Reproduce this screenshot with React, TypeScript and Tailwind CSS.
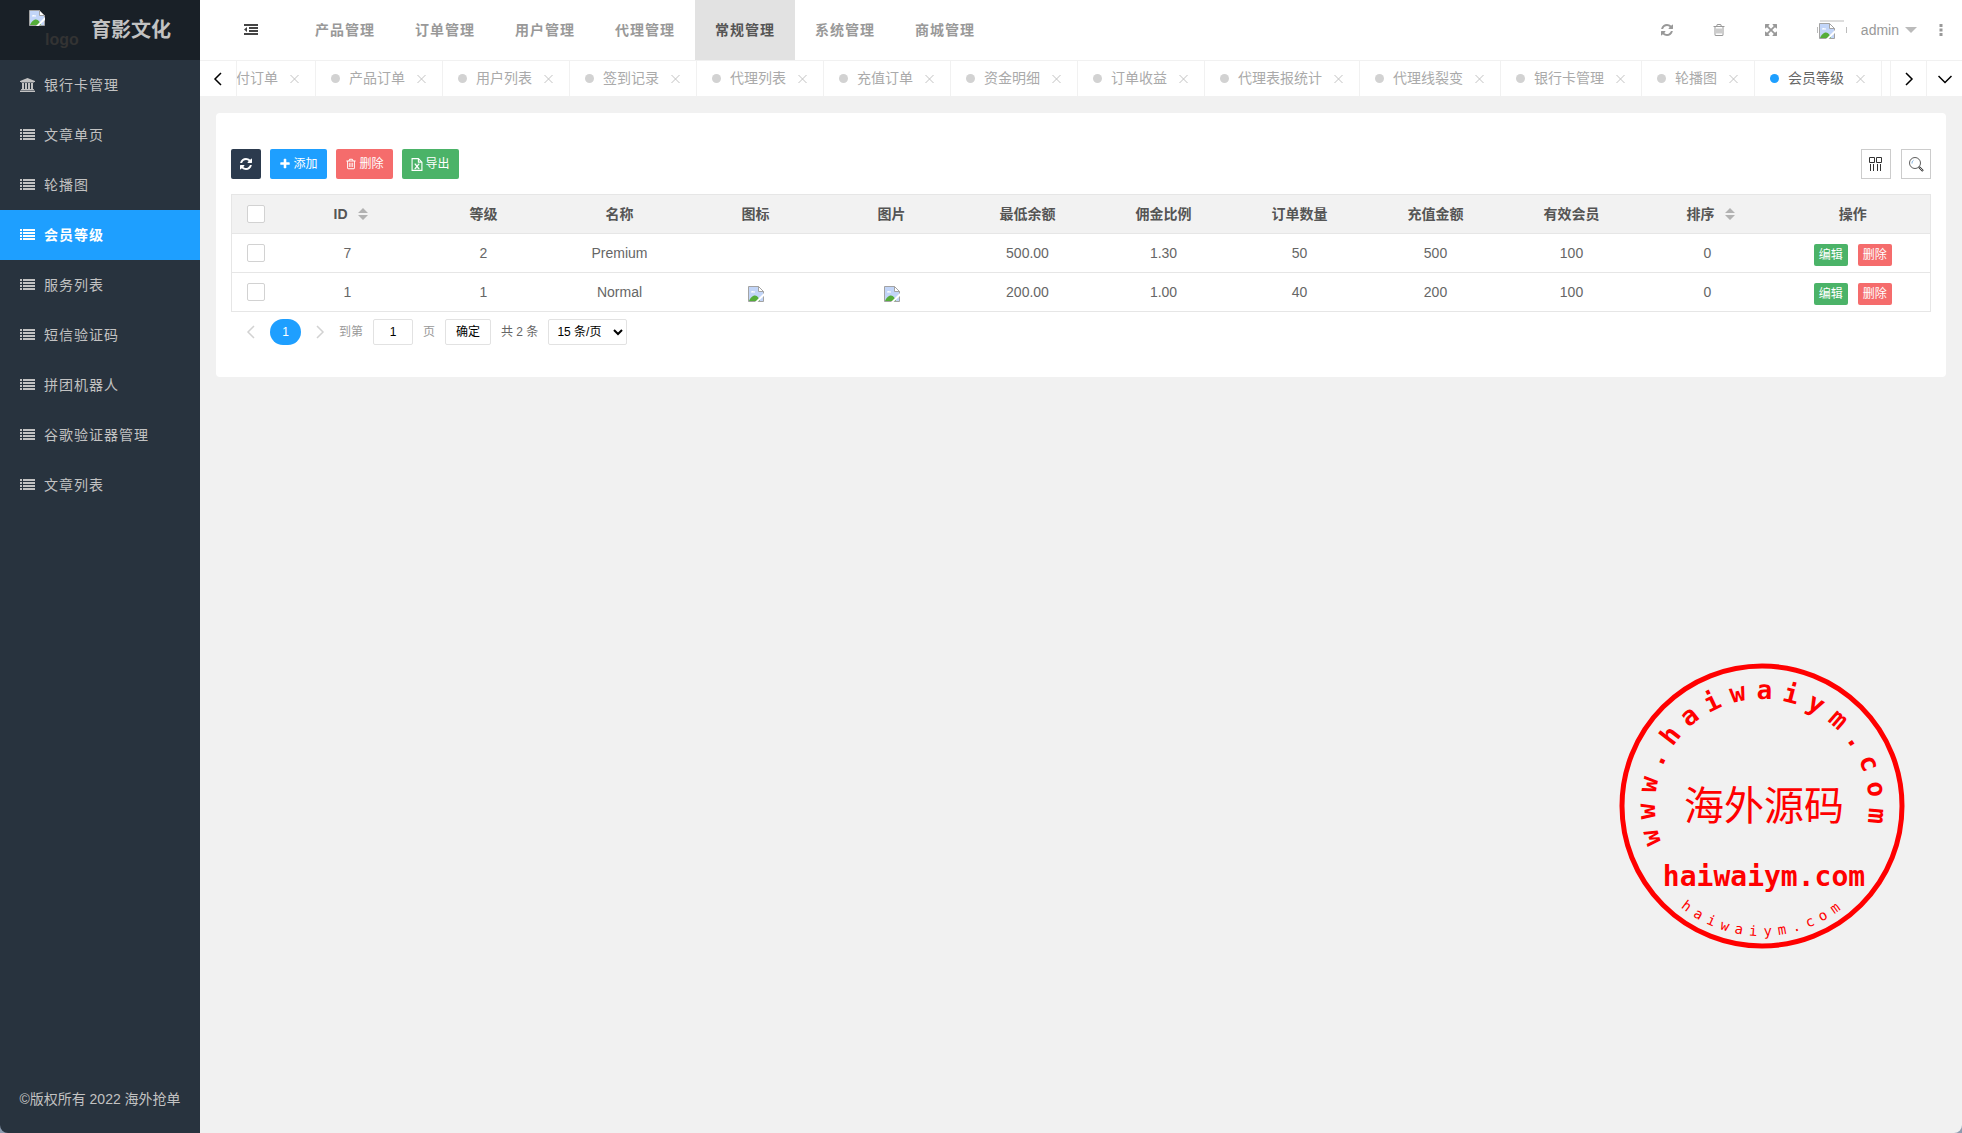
import type { ReactNode } from 'react'

// ── Data ─────────────────────────────────────────────────────
const sideItems = ['银行卡管理', '文章单页', '轮播图', '会员等级', '服务列表', '短信验证码', '拼团机器人', '谷歌验证器管理', '文章列表']
const activeSide = '会员等级'

const topItems = ['产品管理', '订单管理', '用户管理', '代理管理', '常规管理', '系统管理', '商城管理']
const activeTop = '常规管理'

const tabs = [
  '支付订单', '产品订单', '用户列表', '签到记录', '代理列表', '充值订单', '资金明细',
  '订单收益', '代理表报统计', '代理线裂变', '银行卡管理', '轮播图', '会员等级',
]
const activeTab = '会员等级'

const columns = [
  { title: 'ID', sortable: true },
  { title: '等级' },
  { title: '名称' },
  { title: '图标' },
  { title: '图片' },
  { title: '最低余额' },
  { title: '佣金比例' },
  { title: '订单数量' },
  { title: '充值金额' },
  { title: '有效会员' },
  { title: '排序', sortable: true },
]

const rows = [
  { id: 7, level: 2, name: 'Premium', hasImage: false, balance: '500.00', rate: '1.30', orders: 50, recharge: 500, members: 100, sort: 0 },
  { id: 1, level: 1, name: 'Normal', hasImage: true, balance: '200.00', rate: '1.00', orders: 40, recharge: 200, members: 100, sort: 0 },
]

// ── Icons ────────────────────────────────────────────────────
const REFRESH =
  'M1639 1056q0 5-1 7-64 268-268 434.5t-478 166.5q-146 0-282.5-55t-243.5-157l-129 129q-19 19-45 19t-45-19-19-45v-448q0-26 19-45t45-19h448q26 0 45 19t19 45-19 45l-137 137q71 66 161 102t187 36q134 0 250-65t186-179q11-17 53-117 8-23 30-23h192q13 0 22.5 9.5t9.5 22.5zm25-800v448q0 26-19 45t-45 19h-448q-26 0-45-19t-19-45 19-45l138-138q-148-137-349-137-134 0-250 65t-186 179q-11 17-53 117-8 23-30 23h-199q-13 0-22.5-9.5t-9.5-22.5v-7q65-268 270-434.5t480-166.5q146 0 284 55.5t245 156.5l130-129q19-19 45-19t45 19 19 45z'
const TRASH =
  'M704 736v576q0 14-9 23t-23 9h-64q-14 0-23-9t-9-23v-576q0-14 9-23t23-9h64q14 0 23 9t9 23zm256 0v576q0 14-9 23t-23 9h-64q-14 0-23-9t-9-23v-576q0-14 9-23t23-9h64q14 0 23 9t9 23zm256 0v576q0 14-9 23t-23 9h-64q-14 0-23-9t-9-23v-576q0-14 9-23t23-9h64q14 0 23 9t9 23zm128 724v-948h-896v948q0 22 7 40.5t14.5 27 10.5 8.5h832q3 0 10.5-8.5t14.5-27 7-40.5zm-672-1076h448l-48-117q-7-9-17-11h-317q-10 2-17 11zm928 32v64q0 14-9 23t-23 9h-96v948q0 83-47 143.5t-113 60.5h-832q-66 0-113-58.5t-47-141.5v-952h-96q-14 0-23-9t-9-23v-64q0-14 9-23t23-9h309l70-167q15-37 54-63t79-26h320q40 0 79 26t54 63l70 167h309q14 0 23 9t9 23z'
const EXPAND =
  'M1411 541l-355 355 355 355 144-144q29-31 70-14 39 17 39 59v448q0 26-19 45t-45 19h-448q-42 0-59-40-17-39 14-69l144-144-355-355-355 355 144 144q31 30 14 69-17 40-59 40h-448q-26 0-45-19t-19-45v-448q0-42 40-59 39-17 69 14l144 144 355-355-355-355-144 144q-19 19-45 19-12 0-24-5-40-17-40-59v-448q0-26 19-45t45-19h448q42 0 59 40 17 39-14 69l-144 144 355 355 355-355-144-144q-31-30-14-69 17-40 59-40h448q26 0 45 19t19 45v448q0 42-39 59-13 5-25 5-26 0-45-19z'
const PLUS =
  'M1600 736v192q0 40-28 68t-68 28h-416v416q0 40-28 68t-68 28h-192q-40 0-68-28t-28-68v-416h-416q-40 0-68-28t-28-68v-192q0-40 28-68t68-28h416v-416q0-40 28-68t68-28h192q40 0 68 28t28 68v416h416q40 0 68 28t28 68z'

function Glyph({ d, className }: { d: string; className: string }) {
  return (
    <svg viewBox="0 0 1792 1792" fill="currentColor" className={className} aria-hidden="true">
      <path d={d} />
    </svg>
  )
}

function ListIcon() {
  return (
    <svg viewBox="0 0 15 14" fill="currentColor" className="w-[15px] h-[14px] shrink-0" aria-hidden="true">
      <path d="M0 1h2v2H0zM3 1h12v2H3zM0 4h2v2H0zM3 4h12v2H3zM0 7h2v2H0zM3 7h12v2H3zM0 10h2v2H0zM3 10h12v2H3z" />
    </svg>
  )
}

function BankIcon() {
  return (
    <svg viewBox="0 0 15 14" fill="currentColor" className="w-[15px] h-[14px] shrink-0" aria-hidden="true">
      <path d="M7.5 0L15 3v1h-1v.6H1V4H0V3zM2 5h2v6h1V5h2v6h1V5h2v6h1V5h2v6h.6l.4.4v.6H1v-.6l.4-.4H2zM.5 12.4h14l.5.6v1H0v-1z" />
    </svg>
  )
}

function ExcelIcon() {
  return (
    <svg viewBox="0 0 12 14" fill="none" stroke="currentColor" className="w-3 h-[13px]" aria-hidden="true">
      <path d="M1 .7h6.5L11.3 4.5v8.8H.7V.7zM7.5.7v3.8h3.8" strokeWidth="1.2" />
      <path d="M4 6.5l4 5M8 6.5l-4 5" strokeWidth="1.4" />
      <path d="M3.200 6.500h2M6.800 6.500h2M3.200 11.500h2M6.800 11.500h2" strokeWidth=".8" />
    </svg>
  )
}

function BrokenImage() {
  return (
    <svg viewBox="0 0 16 16" className="w-4 h-4 shrink-0" role="img" aria-label="图片加载失败">
      <path d="M.5.5h10l5 5v10H.5z" fill="#c2d5f8" stroke="#a3a3a3" />
      <path d="M10.5.5v5h5z" fill="#fff" stroke="#a3a3a3" />
      <path d="M3 6.500c0-1.500 1.600-1.900 2.100-1 .9-.9 2.300 0 1.900 1z" fill="#fff" />
      <path d="M1 15c1-3 3.500-5.500 6-5.500S11 12 12 15z" fill="#55ad3a" />
      <path d="M16 7l-9 9h2.500L16 10z" fill="#fff" />
    </svg>
  )
}

function Chevron({ d, className }: { d: string; className: string }) {
  return (
    <svg viewBox="0 0 14 14" fill="none" stroke="currentColor" strokeWidth="1.5" className={className} aria-hidden="true">
      <path d={d} />
    </svg>
  )
}
const LEFT = 'M10 1L4 7l6 6'
const RIGHT = 'M4 1l6 6-6 6'
const DOWN = 'M.5 4L7 10.500 13.500 4'

// ── Sidebar ──────────────────────────────────────────────────
function Sidebar() {
  return (
    <aside className="w-[200px] shrink-0 flex flex-col bg-[#28333e] text-[#c2c2c2] rounded-bl-lg">
      <div className="h-[60px] flex items-center pl-[29px] bg-[#192027]">
        <div className="flex w-[50px]" aria-label="logo">
          <BrokenImage />
          <span className="pt-5 text-base leading-5 font-bold text-[#333]">logo</span>
        </div>
        <h1 className="pl-3 text-xl font-bold whitespace-nowrap">育影文化</h1>
      </div>

      <nav className="flex-1">
        {sideItems.map((item) => (
          <a
            key={item}
            href="#"
            className={`h-[50px] flex items-center gap-[9px] pl-5 tracking-[1px] ${item === activeSide ? 'bg-[#1e9fff] text-white font-bold' : ''}`}
          >
            {item === '银行卡管理' ? <BankIcon /> : <ListIcon />}
            {item}
          </a>
        ))}
      </nav>

      <footer className="pb-6 text-center">©版权所有 2022 海外抢单</footer>
    </aside>
  )
}

// ── Top bar ──────────────────────────────────────────────────
function TopBar() {
  return (
    <header className="h-[60px] flex items-center bg-white text-[#999]">
      <button type="button" aria-label="收起菜单" className="w-[95px] flex justify-center pl-1.5 text-[#444]">
        <svg viewBox="0 0 14 14" fill="currentColor" className="w-3.5 h-3.5" aria-hidden="true">
          <path d="M0 1h14v2H0zM5 4h9v2H5zM5 7h9v2H5zM0 10h14v2H0zM3 4v5L0 6.500z" />
        </svg>
      </button>

      <nav className="flex h-full">
        {topItems.map((item) => (
          <a
            key={item}
            href="#"
            className={`h-full flex items-center px-5 font-bold tracking-[1px] whitespace-nowrap ${item === activeTop ? 'bg-[#e2e2e2] text-[#555]' : ''}`}
          >
            {item}
          </a>
        ))}
      </nav>

      <div className="ml-auto flex items-center h-full">
        <button type="button" aria-label="刷新" className="px-[19px]"><Glyph d={REFRESH} className="w-3.5 h-3.5" /></button>
        <button type="button" aria-label="清除缓存" className="px-[19px]"><Glyph d={TRASH} className="w-3.5 h-3.5" /></button>
        <button type="button" aria-label="全屏" className="px-[19px]"><Glyph d={EXPAND} className="w-3.5 h-3.5" /></button>
        <a href="#" className="flex items-center pl-5">
          <span className="w-[30px] h-[30px] flex items-center">
            <svg viewBox="0 0 30 20" className="w-[30px] h-5" aria-hidden="true">
              <path d="M3 1h24M.5 7v6M29.5 7v6" stroke="#bbb" fill="none" />
              <svg x="2" y="3" width="16" height="16"><BrokenImage /></svg>
            </svg>
          </span>
          <span className="pl-3.5 pr-1.5">admin</span>
          <svg viewBox="0 0 12 6" className="w-3 h-1.5" fill="#bbb" aria-hidden="true"><path d="M0 0h12L6 6z" /></svg>
        </a>
        <button type="button" aria-label="更多" className="pl-[22px] pr-[19px]">
          <svg viewBox="0 0 4 12" className="w-1 h-3" fill="currentColor" aria-hidden="true">
            <path d="M.5 0h3v3h-3zM.5 4.5h3v3h-3zM.5 9h3v3h-3z" />
          </svg>
        </button>
      </div>
    </header>
  )
}

// ── Page tabs ────────────────────────────────────────────────
function PageTabs() {
  return (
    <div className="h-[37px] flex bg-white border-y border-[#f1f1f1]">
      <button type="button" aria-label="向左" className="w-[37px] shrink-0 flex items-center justify-center border-r border-[#f1f1f1] text-black">
        <Chevron d={LEFT} className="w-3.5 h-3.5" />
      </button>

      <ul className="flex-1 min-w-0 flex justify-end overflow-hidden pr-2">
        {tabs.map((tab) => {
          const active = tab === activeTab
          return (
            <li key={tab} className="shrink-0 flex items-center px-[15px] border-r border-[#f1f1f1]">
              <span className={`w-[9px] h-[9px] rounded-full ${active ? 'bg-[#1e9fff]' : 'bg-[#d2d2d2]'}`} />
              <a href="#" className={`pl-[9px] pr-3 pb-0.5 whitespace-nowrap ${active ? 'text-[#666]' : 'text-[#aaa]'}`}>{tab}</a>
              <button type="button" aria-label={`关闭${tab}`} className="text-[#c2c2c2] w-2.5">
                <svg viewBox="0 0 10 10" className="w-2.5 h-2.5" fill="none" stroke="currentColor" aria-hidden="true">
                  <path d="M.5 1l8 8M8.500 1l-8 8" />
                </svg>
              </button>
            </li>
          )
        })}
      </ul>

      <button type="button" aria-label="向右" className="w-9 shrink-0 flex items-center justify-center border-l border-[#f1f1f1] text-black">
        <Chevron d={RIGHT} className="w-3.5 h-3.5" />
      </button>
      <button type="button" aria-label="更多标签" className="w-9 shrink-0 flex items-center justify-center border-l border-[#f1f1f1] text-black">
        <Chevron d={DOWN} className="w-3.5 h-3.5" />
      </button>
    </div>
  )
}

// ── Toolbar ──────────────────────────────────────────────────
function ToolButton({ color, label, children }: { color: string; label?: string; children: ReactNode }) {
  return (
    <button type="button" aria-label={label} className={`h-[30px] flex items-center justify-center gap-0.5 rounded-xs text-xs text-white ${color}`}>
      {children}
    </button>
  )
}

function Toolbar() {
  return (
    <div className="flex items-center gap-[9px]">
      <ToolButton color="w-[30px] bg-[#2c3b4e]" label="刷新"><Glyph d={REFRESH} className="w-3.5 h-3.5" /></ToolButton>
      <ToolButton color="w-[57px] bg-[#1e9fff]"><Glyph d={PLUS} className="w-3 h-3" />添加</ToolButton>
      <ToolButton color="w-[57px] bg-[#f56c6c]"><Glyph d={TRASH} className="w-3 h-3" />删除</ToolButton>
      <ToolButton color="w-[57px] bg-[#4bb368]"><ExcelIcon />导出</ToolButton>

      <div className="ml-auto flex gap-2.5 text-[#333]">
        <button type="button" aria-label="筛选列" className="w-[30px] h-[30px] flex items-center justify-center border border-[#ccc]">
          <svg viewBox="0 0 14 14" className="w-3.5 h-3.5" fill="none" stroke="currentColor" aria-hidden="true">
            <path d="M.5.5h5v5h-5zM7.5.5h5v5h-5zM1.5 7v7M4.5 7v7M8.5 7v7M11.5 7v7" />
          </svg>
        </button>
        <button type="button" aria-label="搜索" className="w-[30px] h-[30px] flex items-center justify-center border border-[#ccc]">
          <svg viewBox="0 0 16 16" className="w-4 h-4" fill="none" stroke="currentColor" aria-hidden="true">
            <circle cx="7" cy="7" r="5.5" strokeWidth=".8" />
            <path d="M4 7.500c0-1.500.5-2.500 1.500-3.200" stroke="#5a9bd5" strokeWidth=".8" />
            <path d="M11 11l4 4" strokeWidth="2.200" />
            <path d="M11.500 11.500l3 3" stroke="#fff" strokeWidth=".7" />
          </svg>
        </button>
      </div>
    </div>
  )
}

// ── Table ────────────────────────────────────────────────────
function Check({ label }: { label: string }) {
  return (
    <input
      type="checkbox"
      aria-label={label}
      className="block mx-auto w-[18px] h-[18px] appearance-none rounded-xs border border-[#d2d2d2] bg-white checked:bg-[#1e9fff]"
    />
  )
}

function LevelTable() {
  return (
    <table className="w-full table-fixed border-collapse border border-[#e6e6e6] text-center text-[#666]">
      <thead>
        <tr className="h-[39px] border-b border-[#e6e6e6] bg-[#f2f2f2] text-[#555]">
          <th className="w-12"><Check label="全选" /></th>
          {columns.map((col) => (
            <th key={col.title} className="font-bold">
              {col.sortable ? (
                <span className="inline-flex items-center gap-2.5 pl-1.5">
                  {col.title}
                  <svg viewBox="0 0 10 12" className="w-2.5 h-3" fill="#b2b2b2" aria-hidden="true">
                    <path d="M0 5h10L5 0zM0 7h10l-5 5z" />
                  </svg>
                </span>
              ) : (
                col.title
              )}
            </th>
          ))}
          <th className="w-[155px] font-bold">操作</th>
        </tr>
      </thead>
      <tbody>
        {rows.map((row) => (
          <tr key={row.id} className="h-[39px] border-b border-[#e6e6e6]">
            <td><Check label={`选择 ${row.name}`} /></td>
            <td>{row.id}</td>
            <td>{row.level}</td>
            <td>{row.name}</td>
            <td>{row.hasImage && <span className="flex justify-center pt-1"><BrokenImage /></span>}</td>
            <td>{row.hasImage && <span className="flex justify-center pt-1"><BrokenImage /></span>}</td>
            <td>{row.balance}</td>
            <td>{row.rate}</td>
            <td>{row.orders}</td>
            <td>{row.recharge}</td>
            <td>{row.members}</td>
            <td>{row.sort}</td>
            <td>
              <span className="flex justify-center gap-2.5 pt-1 text-xs text-white">
                <button type="button" className="h-[22px] px-[5px] rounded-xs bg-[#4bb368]">编辑</button>
                <button type="button" className="h-[22px] px-[5px] rounded-xs bg-[#f56c6c]">删除</button>
              </span>
            </td>
          </tr>
        ))}
      </tbody>
    </table>
  )
}

function Pagination() {
  return (
    <div className="flex items-center pt-[7px] pl-[13px] text-xs text-[#999]">
      <button type="button" aria-label="上一页" className="text-[#d2d2d2]"><Chevron d={LEFT} className="w-3.5 h-3.5" /></button>
      <button type="button" className="mx-3 w-[31px] h-[26px] rounded-full bg-[#1e9fff] text-white">1</button>
      <button type="button" aria-label="下一页" className="text-[#d2d2d2]"><Chevron d={RIGHT} className="w-3.5 h-3.5" /></button>
      <label className="flex items-center gap-2.5 pl-3">
        到第
        <input type="text" defaultValue="1" className="w-10 h-[26px] rounded-xs border border-[#e2e2e2] text-center text-black" />
        页
      </label>
      <button type="button" className="ml-2.5 w-[46px] h-[26px] rounded-xs border border-[#e2e2e2] text-black">确定</button>
      <span className="px-2.5 text-[#666]">共 2 条</span>
      <select aria-label="每页条数" className="w-[79px] h-[26px] pl-1 rounded-xs border border-[#e2e2e2] bg-white text-black">
        <option>15 条/页</option>
        <option>30 条/页</option>
      </select>
    </div>
  )
}

// ── Seal ─────────────────────────────────────────────────────
function Seal() {
  return (
    <svg viewBox="-143 -143 286 286" className="absolute right-[57px] bottom-[184px] w-[286px] h-[286px] pointer-events-none" fill="#f00" textAnchor="middle">
      <circle r="140" fill="none" stroke="#f00" strokeWidth="5" />
      <g className="font-['DejaVu_Sans_Mono',monospace] text-[26px] font-bold">
        {[...'www.haiwaiym.com'].map((ch, i) => (
          <text key={i} y="-107" transform={`rotate(${-106 + i * 13.4})`}>{ch}</text>
        ))}
      </g>
      <text x="2" y="14" className="font-[KaiTi,'Noto_Sans_CJK_SC',sans-serif] text-[40px]">海外源码</text>
      <text x="2" y="80" className="font-['DejaVu_Sans_Mono',monospace] text-[28px] font-bold">haiwaiym.com</text>
      <g className="font-['DejaVu_Sans_Mono',monospace] text-sm">
        {[...'haiwaiym.com'].map((ch, i) => (
          <text key={i} y="130" transform={`rotate(${37 - i * 6.6})`}>{ch}</text>
        ))}
      </g>
    </svg>
  )
}

export default function App() {
  return (
    <div className="relative min-h-screen flex bg-[#8d9cb0] text-sm font-['Liberation_Sans','Noto_Sans_CJK_SC',sans-serif]">
      <Sidebar />
      <main className="flex-1 min-w-0 bg-[#f1f1f1] rounded-br-lg">
        <TopBar />
        <PageTabs />
        <section className="m-4 px-[15px] pt-9 pb-8 rounded bg-white">
          <Toolbar />
          <div className="pt-[15px]">
            <LevelTable />
            <Pagination />
          </div>
        </section>
      </main>
      <Seal />
    </div>
  )
}
